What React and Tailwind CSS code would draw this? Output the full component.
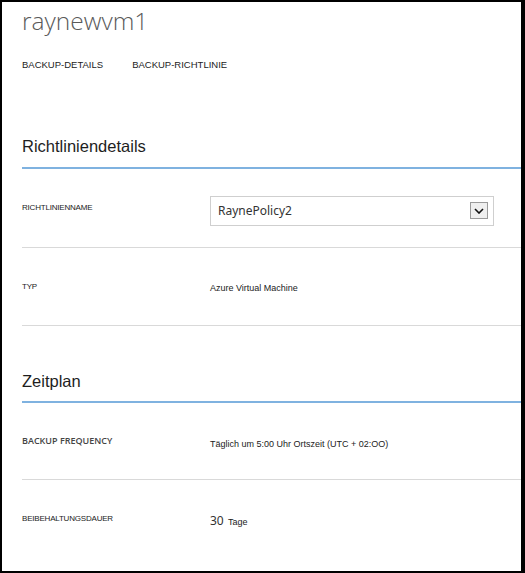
import React from "react";

const arial = { fontFamily: "'Liberation Sans', Arial, sans-serif" };

const Row = ({ label, children, h, bold, last, valueClass = "" }) => (
  <div
    className={`flex items-center ${h} ${last ? "" : "border-b border-[#d9d9d9]"}`}
  >
    <div
      className={
        bold
          ? "w-[188px] shrink-0 font-['Open_Sans',sans-serif] text-[9px] font-semibold text-[#444]"
          : "w-[188px] shrink-0 font-['Liberation_Sans',Arial,sans-serif] text-[8px] tracking-[-0.2px] text-[#222]"
      }
    >
      {label}
    </div>
    <div className={`flex-1 ${valueClass}`}>{children}</div>
  </div>
);

const SectionHeading = ({ title, h, pb }) => (
  <div className={`flex items-end ${h} ${pb} border-b-2 border-[#7fb2e0]`}>
    <h2 className="font-['Liberation_Sans',Arial,sans-serif] text-[16.5px] leading-[20px] text-[#1e1e1e]">
      {title}
    </h2>
  </div>
);

export default function App() {
  return (
    <div className="w-[525px] h-[573px] overflow-hidden bg-white border-black border-t-2 border-l-2 border-r-4 border-b-2 pl-5">
      {/* Header */}
      <div className="h-[88px] pt-[3px]">
        <h1 className="font-['Open_Sans',sans-serif] text-[24.5px] leading-[32px] font-light text-[#5a5a5a]">
          raynewvm1
        </h1>
        <div
          className="mt-[22px] flex gap-[29px] text-[9.5px] leading-[12px] text-[#222]"
          style={arial}
        >
          <span>BACKUP-DETAILS</span>
          <span>BACKUP-RICHTLINIE</span>
        </div>
      </div>

      {/* Richtliniendetails */}
      <SectionHeading title="Richtliniendetails" h="h-[79px]" pb="pb-[11px]" />
      <Row label="RICHTLINIENNAME" h="h-[79px]">
        <div className="mt-[5px] flex h-[30px] w-[284px] items-center justify-between border border-[#cfcfcf] pl-[7px] pr-[5px]">
          <span className="font-['Noto_Sans',sans-serif] text-[12px] text-[#333]">
            RaynePolicy2
          </span>
          <span className="flex h-[17px] w-[18px] items-center justify-center border border-[#9a9a9a] bg-[#efefef]">
            <svg width="10" height="6" viewBox="0 0 10 6">
              <path d="M1 1 L5 5 L9 1" fill="none" stroke="#111" strokeWidth="1.6" />
            </svg>
          </span>
        </div>
      </Row>
      <Row label="TYP" h="h-[78px]" valueClass="pb-[3px]">
        <span className="text-[9px] text-[#222]" style={arial}>
          Azure Virtual Machine
        </span>
      </Row>

      {/* Zeitplan */}
      <SectionHeading title="Zeitplan" h="h-[77px]" pb="pb-[10px]" />
      <Row label="BACKUP FREQUENCY" h="h-[77px]" bold>
        <span className="text-[9px] text-[#222]" style={arial}>
          Täglich um 5:00 Uhr Ortszeit (UTC + 02:OO)
        </span>
      </Row>
      <Row label="BEIBEHALTUNGSDAUER" h="h-[78px]" last>
        <span className="font-['Noto_Sans',sans-serif] text-[12px] text-[#333]">
          30
        </span>{" "}
        <span className="text-[9px] text-[#222]" style={arial}>
          Tage
        </span>
      </Row>
    </div>
  );
}
